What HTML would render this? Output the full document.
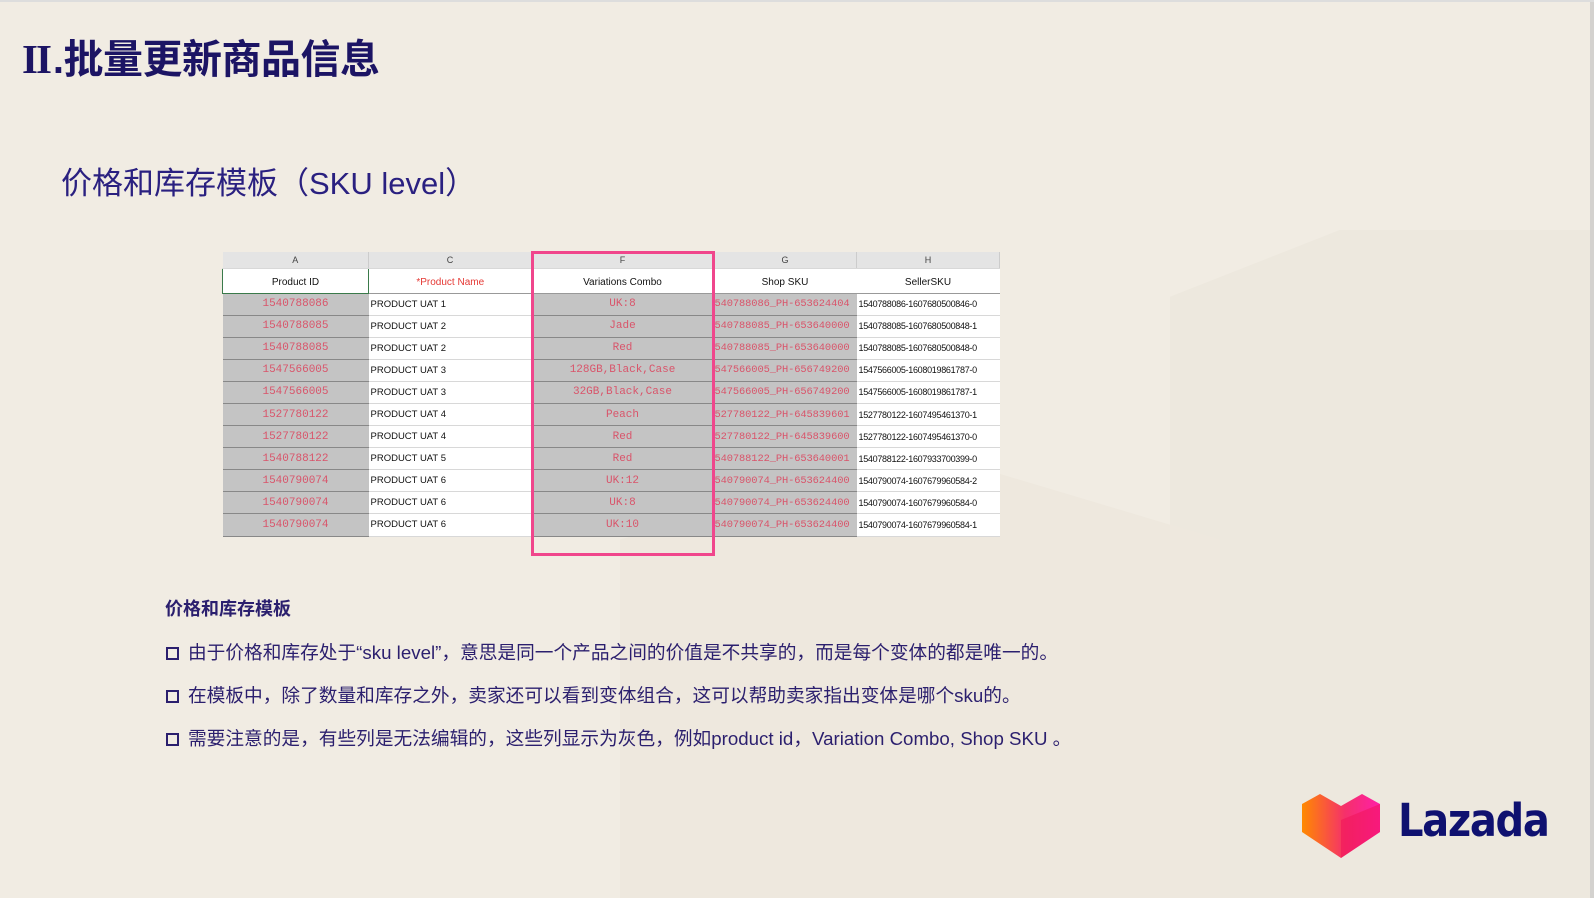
<!DOCTYPE html>
<html><head><meta charset="utf-8"><style>
*{margin:0;padding:0;box-sizing:border-box}
body{width:1594px;height:898px;overflow:hidden;background:#f1ece3;position:relative;font-family:"Liberation Sans","Noto Sans CJK SC",sans-serif}
.abs{position:absolute}
#t1{left:22px;top:27px;font-size:40px;font-weight:bold;color:#1c1464;white-space:nowrap;letter-spacing:-0.5px}
#t2{left:61px;top:158px;font-size:31px;color:#2a2080;white-space:nowrap}
table{position:absolute;left:222px;top:252px;border-collapse:collapse;table-layout:fixed;font-size:10px;width:778px}
td{height:22px;border-bottom:1px solid #d8d8d8;white-space:nowrap;overflow:hidden;padding:0 2px;background:#fff;color:#111;font-family:"Liberation Sans",sans-serif}
tr.d td{height:22.1px}
tr.h td{height:16px;background:#e4e4e4;color:#444;text-align:center;font-size:9px;border-right:1px solid #ccc}
tr.f td{height:25px;text-align:center;font-size:10px;border-bottom:1px solid #999;padding-top:3px}
td.g{background:#c4c4c4;color:#d9546a;font-family:"Liberation Mono",monospace;text-align:center;font-size:11px;border-bottom:1px solid #888}
td.k{text-align:left;font-size:10.4px;padding:0 0 0 1px;letter-spacing:-.1px}
td.n{font-size:9.5px}
td.s{font-size:9px;letter-spacing:-.3px}
#box{left:531px;top:251px;width:184px;height:305px;border:3px solid #f0468c}
.txt{color:#2b1f6e;white-space:nowrap;font-size:18.7px}
.bl{display:inline-block;width:13px;height:13px;border:2.5px solid #2b1f6e;margin-right:9px;vertical-align:-1px}
</style></head><body>
<div class="abs" style="left:1170px;top:230px;width:424px;height:668px;background:#ede8de;clip-path:polygon(40% 0,100% 0,100% 100%,0 100%,0 10%)"></div>
<div class="abs" style="left:620px;top:450px;width:600px;height:448px;background:#eee8de;clip-path:polygon(50% 0,100% 20%,100% 100%,0 100%,0 20%)"></div>
<div class="abs" style="right:0;top:0;width:4px;height:898px;background:#d4d2cf"></div>
<div class="abs" style="left:0;top:0;width:1594px;height:2px;background:#ddd"></div>
<div class="abs" id="t1"><span style="font-family:'Liberation Serif',serif;font-size:41px;letter-spacing:-2px">II</span><span style="margin-left:3px">.</span>批量更新商品信息</div>
<div class="abs" id="t2">价格和库存模板（SKU level）</div>
<table>
<colgroup><col style="width:146px"><col style="width:163px"><col style="width:182px"><col style="width:143px"><col style="width:143px"></colgroup>
<tr class="h"><td>A</td><td>C</td><td>F</td><td>G</td><td>H</td></tr>
<tr class="f"><td style="border:1px solid #3a7a4a">Product ID</td><td style="color:#e53935">*Product Name</td><td>Variations Combo</td><td>Shop SKU</td><td>SellerSKU</td></tr>
<tr class="d"><td class="g">1540788086</td><td class="n">PRODUCT UAT 1</td><td class="g">UK:8</td><td class="g k">540788086_PH-653624404</td><td class="s">1540788086-1607680500846-0</td></tr>
<tr class="d"><td class="g">1540788085</td><td class="n">PRODUCT UAT 2</td><td class="g">Jade</td><td class="g k">540788085_PH-653640000</td><td class="s">1540788085-1607680500848-1</td></tr>
<tr class="d"><td class="g">1540788085</td><td class="n">PRODUCT UAT 2</td><td class="g">Red</td><td class="g k">540788085_PH-653640000</td><td class="s">1540788085-1607680500848-0</td></tr>
<tr class="d"><td class="g">1547566005</td><td class="n">PRODUCT UAT 3</td><td class="g">128GB,Black,Case</td><td class="g k">547566005_PH-656749200</td><td class="s">1547566005-1608019861787-0</td></tr>
<tr class="d"><td class="g">1547566005</td><td class="n">PRODUCT UAT 3</td><td class="g">32GB,Black,Case</td><td class="g k">547566005_PH-656749200</td><td class="s">1547566005-1608019861787-1</td></tr>
<tr class="d"><td class="g">1527780122</td><td class="n">PRODUCT UAT 4</td><td class="g">Peach</td><td class="g k">527780122_PH-645839601</td><td class="s">1527780122-1607495461370-1</td></tr>
<tr class="d"><td class="g">1527780122</td><td class="n">PRODUCT UAT 4</td><td class="g">Red</td><td class="g k">527780122_PH-645839600</td><td class="s">1527780122-1607495461370-0</td></tr>
<tr class="d"><td class="g">1540788122</td><td class="n">PRODUCT UAT 5</td><td class="g">Red</td><td class="g k">540788122_PH-653640001</td><td class="s">1540788122-1607933700399-0</td></tr>
<tr class="d"><td class="g">1540790074</td><td class="n">PRODUCT UAT 6</td><td class="g">UK:12</td><td class="g k">540790074_PH-653624400</td><td class="s">1540790074-1607679960584-2</td></tr>
<tr class="d"><td class="g">1540790074</td><td class="n">PRODUCT UAT 6</td><td class="g">UK:8</td><td class="g k">540790074_PH-653624400</td><td class="s">1540790074-1607679960584-0</td></tr>
<tr class="d"><td class="g">1540790074</td><td class="n">PRODUCT UAT 6</td><td class="g">UK:10</td><td class="g k">540790074_PH-653624400</td><td class="s">1540790074-1607679960584-1</td></tr>
</table>
<div class="abs" id="box"></div>
<div class="abs txt" style="left:165px;top:595px;font-size:18px;font-weight:bold">价格和库存模板</div>
<div class="abs txt" style="left:166px;top:638px"><span class="bl"></span>由于价格和库存处于“sku level”，意思是同一个产品之间的价值是不共享的，而是每个变体的都是唯一的。</div>
<div class="abs txt" style="left:166px;top:681px"><span class="bl"></span>在模板中，除了数量和库存之外，卖家还可以看到变体组合，这可以帮助卖家指出变体是哪个sku的。</div>
<div class="abs txt" style="left:166px;top:724px"><span class="bl"></span>需要注意的是，有些列是无法编辑的，这些列显示为灰色，例如product id，Variation Combo, Shop SKU 。</div>
<svg class="abs" style="left:1300px;top:792px" width="82" height="68" viewBox="0 0 82 68">
<defs><linearGradient id="lg" x1="0" x2="1" y1="0" y2="0"><stop offset="0" stop-color="#ff8a00"/><stop offset=".55" stop-color="#f5306a"/><stop offset="1" stop-color="#ff1fa8"/></linearGradient></defs>
<path d="M2 12 L20 2 L41 14 L62 2 L80 12 L80 40 L41 66 L2 40 Z" fill="url(#lg)"/>
<path d="M41 28 L80 12 L80 40 L41 66 Z" fill="#f0145a" opacity=".55"/>
</svg>
<div class="abs" style="left:1398px;top:794px;font-size:45px;font-weight:bold;color:#0f1170;letter-spacing:-1.5px;font-family:'DejaVu Sans',sans-serif;transform:scaleX(0.89);transform-origin:left">Lazada</div>
</body></html>
